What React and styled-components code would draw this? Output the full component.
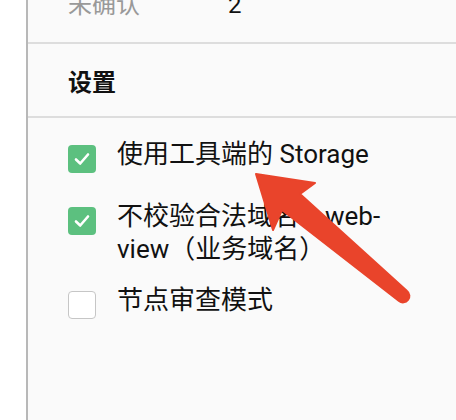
import styled, { createGlobalStyle } from 'styled-components'

const GlobalStyle = createGlobalStyle`
  html, body {
    margin: 0;
    padding: 0;
    background: #fff;
  }
  body {
    font-family: Roboto, 'Noto Sans CJK SC', sans-serif;
    color: #111;
  }
`

const Page = styled.div`
  position: relative;
  display: flex;
  width: 456px;
  height: 420px;
  overflow: hidden;
  background: #fff;
`

const Gutter = styled.div`
  width: 26px;
  flex-shrink: 0;
`

const Panel = styled.section`
  flex: 1;
  background: #fafafa;
  border-left: 2px solid #b8b8b8;
  display: flex;
  flex-direction: column;
`

const InfoRow = styled.div`
  height: 42px;
  display: flex;
  align-items: flex-end;
  padding: 0 0 25px 40px;
  box-sizing: border-box;
  border-bottom: 2px solid #dddddd;
  font-size: 24px;
  line-height: 24px;
  height: 44px;
`

const InfoLabel = styled.span`
  width: 160px;
  color: #999;
`

const InfoValue = styled.span`
  color: #111;
`

const SectionTitle = styled.h3`
  margin: 0;
  height: 74px;
  box-sizing: border-box;
  display: flex;
  align-items: center;
  padding-left: 40px;
  font-size: 24px;
  font-weight: bold;
  border-bottom: 2px solid #dddddd;
`

const OptionList = styled.div`
  display: flex;
  flex-direction: column;
  gap: 18px;
  padding: 20px 46px 0 40px;
`

const Option = styled.label`
  display: flex;
  align-items: flex-start;
  gap: 21px;
  min-height: 44px;
  font-size: 26px;
  line-height: 33px;
`

const Box = styled.span`
  width: 28px;
  height: 28px;
  flex-shrink: 0;
  margin-top: 7px;
  box-sizing: border-box;
  border-radius: 4px;
  display: flex;
  align-items: center;
  justify-content: center;
  background: ${(p) => (p.checked ? '#5cc07f' : '#fff')};
  border: ${(p) => (p.checked ? 'none' : '1px solid #c6c6c6')};
`

const Text = styled.span`
  flex: 1;
`

const Arrow = styled.svg`
  position: absolute;
  left: 0;
  top: 0;
  pointer-events: none;
`

const Checkbox = ({ checked }) => (
  <Box checked={checked}>
    {checked && (
      <svg width='18' height='18' viewBox='0 0 18 18'>
        <path
          d='M3 9.5 L7.2 13.5 L15 4.5'
          fill='none'
          stroke='#fff'
          strokeWidth='2.6'
          strokeLinecap='round'
          strokeLinejoin='round'
        />
      </svg>
    )}
  </Box>
)

const options = [
  { label: '使用工具端的 Storage', checked: true },
  { label: '不校验合法域名、web-view（业务域名）', checked: true },
  { label: '节点审查模式', checked: false },
]

export default function App() {
  return (
    <>
      <GlobalStyle />
      <Page>
        <Gutter />
        <Panel>
          <InfoRow>
            <InfoLabel>未确认</InfoLabel>
            <InfoValue>2</InfoValue>
          </InfoRow>
          <SectionTitle>设置</SectionTitle>
          <OptionList>
            {options.map((o) => (
              <Option key={o.label}>
                <Checkbox checked={o.checked} />
                <Text>{o.label}</Text>
              </Option>
            ))}
          </OptionList>
        </Panel>
        <Arrow width='456' height='420' viewBox='0 0 456 420'>
          <path
            d='M256 174 L315 183 L300 194 L407 291 A6 6 0 0 1 399 301 L282 210 L273 230 Z'
            fill='#e9442b'
            stroke='#e9442b'
            strokeWidth='2'
            strokeLinejoin='round'
          />
        </Arrow>
      </Page>
    </>
  )
}
